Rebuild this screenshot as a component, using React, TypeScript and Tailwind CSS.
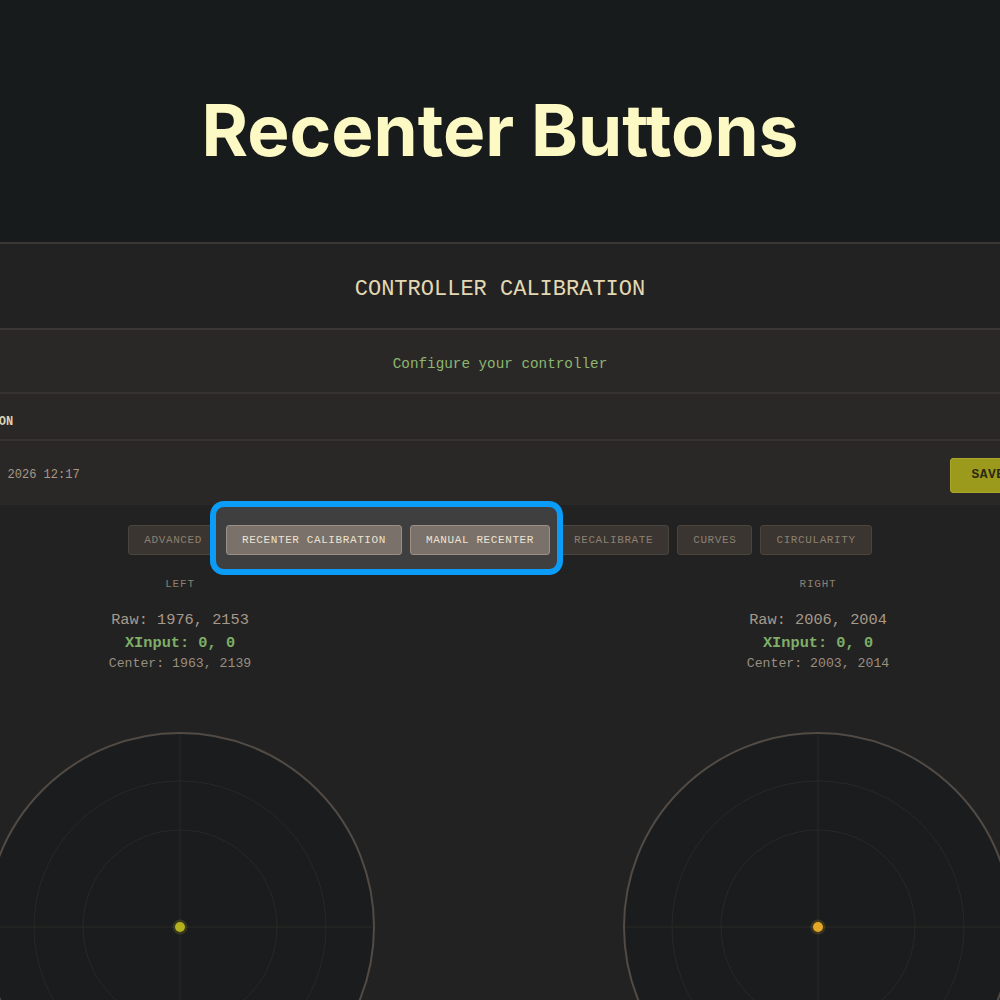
import React from "react";

const mono = "font-['Liberation_Mono','DejaVu_Sans_Mono',monospace]";

type Tab = { label: string; active?: boolean };

const tabs: Tab[] = [
  { label: "ADVANCED" },
  { label: "RECENTER CALIBRATION", active: true },
  { label: "MANUAL RECENTER", active: true },
  { label: "RECALIBRATE" },
  { label: "CURVES" },
  { label: "CIRCULARITY" },
];

type Stick = {
  side: string;
  raw: [number, number];
  center: [number, number];
  dot: string;
  glow: string;
};

const sticks: Stick[] = [
  { side: "LEFT", raw: [1976, 2153], center: [1963, 2139], dot: "#b3b21e", glow: "rgba(179,178,30,0.18)" },
  { side: "RIGHT", raw: [2006, 2004], center: [2003, 2014], dot: "#e2a725", glow: "rgba(226,167,37,0.18)" },
];

function TabButton({ tab }: { tab: Tab }) {
  return (
    <button
      className={`${mono} h-[30px] rounded-[3px] border px-[15px] text-[11px] tracking-[0.6px] ${
        tab.active
          ? "relative z-10 border-[#998f87] bg-[#7a716a] text-[#ece3d2]"
          : "border-[#4a443f] bg-[#3a3531] text-[#8b8071]"
      }`}
    >
      {tab.label}
    </button>
  );
}

function StickPad({ stick }: { stick: Stick }) {
  return (
    <div className="flex w-[390px] flex-col items-center">
      <span className={`${mono} mt-[22px] text-[11px] leading-[14px] tracking-[0.8px] text-[#8b8071]`}>
        {stick.side}
      </span>
      <span className={`${mono} mt-[18px] text-[15.3px] leading-[23px] text-[#a6998a]`}>
        Raw: {stick.raw[0]}, {stick.raw[1]}
      </span>
      <span className={`${mono} text-[15.3px] font-bold leading-[22px] text-[#7fae67]`}>
        XInput: 0, 0
      </span>
      <span className={`${mono} text-[13.2px] leading-[20px] text-[#9a8e80]`}>
        Center: {stick.center[0]}, {stick.center[1]}
      </span>
      <svg width="390" height="390" viewBox="0 0 390 390" className="mt-[58px] shrink-0">
        <circle cx="195" cy="195" r="194" fill="#1a1c1d" stroke="#524b45" strokeWidth="2" />
        <circle cx="195" cy="195" r="146" fill="none" stroke="#2a2826" strokeWidth="1" />
        <circle cx="195" cy="195" r="97" fill="none" stroke="#2a2826" strokeWidth="1" />
        <line x1="195" y1="2" x2="195" y2="388" stroke="#2b2927" strokeWidth="1" />
        <line x1="2" y1="195" x2="388" y2="195" stroke="#2b2927" strokeWidth="1" />
        <circle cx="195" cy="195" r="7.5" fill={stick.glow} />
        <circle cx="195" cy="195" r="5" fill={stick.dot} />
      </svg>
    </div>
  );
}

export default function App() {
  return (
    <div className="h-[1000px] w-[1000px] overflow-hidden bg-[#181b1c]">
      <header className="flex h-[242px] items-center justify-center pt-[18px]">
        <h1 className="font-['Inter','Liberation_Sans',sans-serif] text-[71px] font-bold text-[#fdf9c5]">
          Recenter Buttons
        </h1>
      </header>

      <div className="-ml-[100px] w-[1200px]">
        <div className="flex h-[88px] items-center justify-center border-y-2 border-[#3a3734] bg-[#222222] pt-[6px]">
          <h2 className={`${mono} text-[22px] text-[#e2d8b3]`}>CONTROLLER CALIBRATION</h2>
        </div>

        <div className="flex h-[64px] items-center justify-center border-b-2 border-[#353230] bg-[#2a2826] pt-[8px]">
          <p className={`${mono} text-[14.3px] text-[#8db672]`}>Configure your controller</p>
        </div>

        <div className="flex h-[47px] items-center border-b-2 border-[#353230] bg-[#2a2826] pl-[34px] pt-[10px]">
          <span className={`${mono} text-[12px] font-bold text-[#dcd2b4]`}>CALIBRATION</span>
        </div>

        <div className="flex h-[64px] items-center justify-between bg-[#2a2826] pl-[14px] pr-[74px] pt-[4px]">
          <span className={`${mono} text-[12px] text-[#a6998a]`}>Saved 14 Jan 2026 12:17</span>
          <button
            className={`${mono} h-[35px] w-[76px] rounded-[3px] border border-[#a9a72a] bg-[#9c9a1d] text-[13px] font-bold tracking-[0.5px] text-[#2b2a12]`}
          >
            SAVE
          </button>
        </div>

        <main className="bg-[#222222]">
          <div className="relative flex justify-center gap-[8px] pt-[20px]">
            {/* highlight frame around the recenter actions */}
            <div className="absolute left-[310px] top-[-4px] z-0 h-[74px] w-[353px] rounded-[14px] border-[6px] border-[#0a9cf6] bg-[#3f3f3f]" />
            {tabs.map((tab) => (
              <TabButton key={tab.label} tab={tab} />
            ))}
          </div>

          <div className="flex justify-between pl-[85px] pr-[87px]">
            {sticks.map((stick) => (
              <StickPad key={stick.side} stick={stick} />
            ))}
          </div>
        </main>
      </div>
    </div>
  );
}
